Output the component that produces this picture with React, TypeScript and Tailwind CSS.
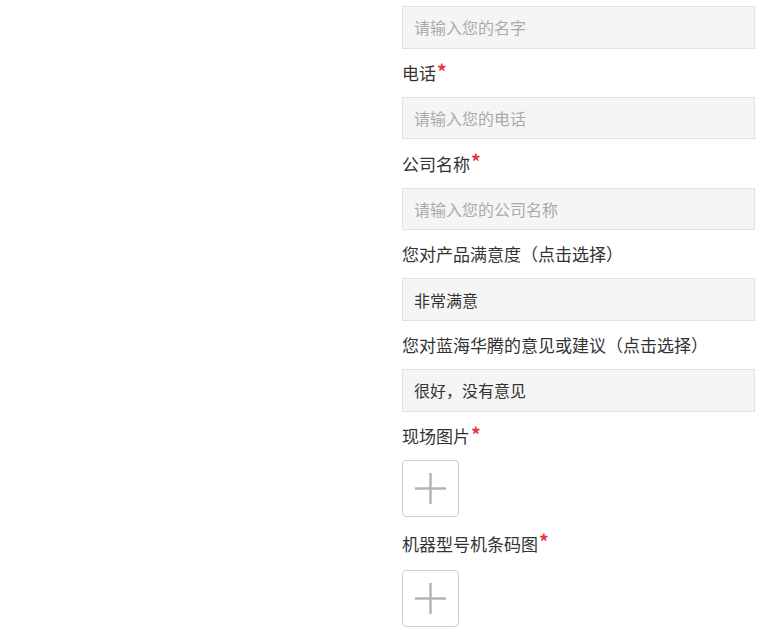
import React from "react";

const Label = ({ text, required, tall }: { text: string; required?: boolean; tall?: boolean }) => (
  <div className={`flex items-center text-[17px] text-[#333] ${tall ? "h-[53px]" : "h-[48.25px]"}`}>
    <span>{text}</span>
    {required && <span className="text-[#e4393c] text-[19px] leading-none -mt-[5px] ml-[1px] font-bold">*</span>}
  </div>
);

const Field = ({ placeholder, value }: { placeholder?: string; value?: string }) => (
  <div className="h-[42.5px] w-full border border-[#e2e2e2] bg-[#f5f5f5] flex items-center pl-[11px] text-[16px]">
    {value ? <span className="text-[#333]">{value}</span> : <span className="text-[#aaa]">{placeholder}</span>}
  </div>
);

const Upload = () => (
  <div className="w-[57px] h-[57px] border border-[#cfcfcf] rounded-[4px] bg-white flex items-center justify-center">
    <svg width="31" height="31" viewBox="0 0 31 31">
      <rect x="0" y="14.3" width="31" height="2.4" fill="#b3b3b3" />
      <rect x="14.3" y="0" width="2.4" height="31" fill="#b3b3b3" />
    </svg>
  </div>
);

export default function App() {
  return (
    <div
      className="w-[766px] h-[639px] overflow-hidden bg-white pt-[6px] pl-[402px] pr-[11px]"
      style={{ fontFamily: '"Noto Sans CJK SC", "Noto Sans", sans-serif' }}
    >
      <div className="flex flex-col w-[353px]">
        <Field placeholder="请输入您的名字" />
        <Label text="电话" required />
        <Field placeholder="请输入您的电话" />
        <Label text="公司名称" required />
        <Field placeholder="请输入您的公司名称" />
        <Label text="您对产品满意度（点击选择）" />
        <Field value="非常满意" />
        <Label text="您对蓝海华腾的意见或建议（点击选择）" />
        <Field value="很好，没有意见" />
        <Label text="现场图片" required />
        <Upload />
        <Label text="机器型号机条码图" required tall />
        <Upload />
      </div>
    </div>
  );
}
